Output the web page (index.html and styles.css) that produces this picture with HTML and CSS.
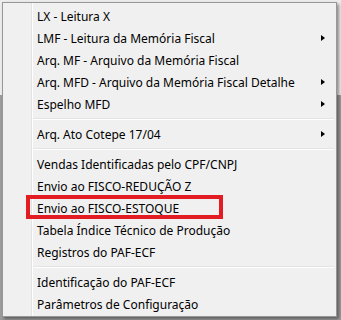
FILE: index.html
```html
<!DOCTYPE html>
<html lang="pt-br">
<head>
  <meta charset="UTF-8">
  <title>Menu Fiscal</title>
  <link rel="stylesheet" href="styles.css">
</head>
<body>

  <div class="menu">
    <div class="gutter"></div>
    <ul class="items">
      <li class="item">LX - Leitura X</li>
      <li class="item has-sub">LMF - Leitura da Memória Fiscal<i class="arrow"></i></li>
      <li class="item">Arq. MF - Arquivo da Memória Fiscal</li>
      <li class="item has-sub">Arq. MFD - Arquivo da Memória Fiscal Detalhe<i class="arrow"></i></li>
      <li class="item has-sub">Espelho MFD<i class="arrow"></i></li>
      <li class="sep"></li>
      <li class="item has-sub">Arq. Ato Cotepe 17/04<i class="arrow"></i></li>
      <li class="sep"></li>
      <li class="item">Vendas Identificadas pelo CPF/CNPJ</li>
      <li class="item">Envio ao FISCO-REDUÇÃO Z</li>
      <li class="item marked">Envio ao FISCO-ESTOQUE<span class="highlight"></span></li>
      <li class="item">Tabela Índice Técnico de Produção</li>
      <li class="item">Registros do PAF-ECF</li>
      <li class="sep"></li>
      <li class="item">Identificação do PAF-ECF</li>
      <li class="item">Parâmetros de Configuração</li>
    </ul>
  </div>

</body>
</html>
```

FILE: styles.css
```css
:root {
  --menu-bg: #f0f0f0;
  --menu-border: #979797;
  --line-color: #e2e3e3;
  --mark-color: #e31b23;
}
body {
  margin: 0;
  height: 320px;
  overflow: hidden;
  background: linear-gradient(to bottom, #ececec 0, #ececec 95px, #9c9c9c 95px);
  font-family: "Noto Sans", "Open Sans", sans-serif;
  font-size: 12px;
  color: #000;
}
.menu {
  display: flex;
  width: 335px;
  height: 315px;
  box-sizing: border-box;
  margin: 2px 0 0 2px;
  padding: 2px 0 1px 0;
  background-color: var(--menu-bg);
  border: 1px solid var(--menu-border);
  box-shadow: 2px 2px 3px rgba(0,0,0,0.4);
}
.gutter {
  width: 28px;
  margin-top: -2px;
  margin-bottom: -1px;
  border-right: 1px solid var(--line-color);
}
.items {
  flex: 1;
  list-style: none;
  margin: 0;
  padding: 0;
  border-left: 1px solid #fff;
  margin-top: -2px;
  margin-bottom: -1px;
  padding-top: 2px;
}
.item {
  position: relative;
  display: flex;
  align-items: center;
  justify-content: space-between;
  height: 22px;
  padding: 0 11px 0 4px;
  white-space: nowrap;
}
.arrow {
  width: 0;
  height: 0;
  border-left: 4px solid #000;
  border-top: 3.5px solid transparent;
  border-bottom: 3.5px solid transparent;
}

/* linha divisória dupla: cinza em cima, branca embaixo */
.sep {
  height: 8px;
  display: flex;
  flex-direction: column;
  justify-content: center;
  padding-right: 2px;
}
.sep::after {
  content: "";
  display: block;
  border-top: 1px solid var(--line-color);
  border-bottom: 1px solid #fff;
}

/* marcação vermelha sobre o item */
.highlight {
  position: absolute;
  left: -7px;
  top: -2px;
  width: 197px;
  height: 24px;
  box-sizing: border-box;
  border: 4px solid var(--mark-color);
}
```
